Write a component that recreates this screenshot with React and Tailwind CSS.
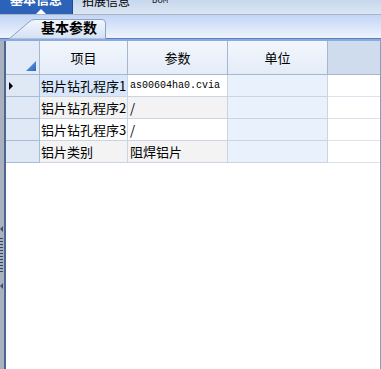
const cjk = { fontFamily: '"Noto Sans CJK SC", "Liberation Sans", sans-serif' };

const rows = [
  { name: '铝片钻孔程序1', value: 'as00604ha0.cvia', mono: true, current: true },
  { name: '铝片钻孔程序2', value: '/' },
  { name: '铝片钻孔程序3', value: '/' },
  { name: '铝片类别', value: '阻焊铝片' },
];

function TopTabs() {
  return (
    <div className="relative h-[15px] flex items-start border-b border-[#a9b5c6] bg-gradient-to-b from-[#c7d7ec] to-[#dbe6f3] overflow-hidden">
      <div className="relative w-[73px] h-[14px] bg-[#2c62b8] border-r border-[#1d4a93] overflow-hidden">
        <span className="absolute left-[10px] top-[-9px] text-[13px] font-bold text-white leading-[16px]" style={cjk}>基本信息</span>
        <span className="absolute left-[36px] bottom-0 w-0 h-0 border-l-[5px] border-r-[5px] border-b-[5px] border-l-transparent border-r-transparent border-b-white" />
      </div>
      <span className="ml-[9px] relative top-[-7px] text-[12px] text-black leading-[16px]" style={cjk}>拍展信息</span>
      <span className="ml-[22px] relative top-[-5px] text-[9px] text-[#222] leading-[12px]" style={{ fontFamily: '"Liberation Mono", monospace' }}>BOM</span>
    </div>
  );
}

function SubTabs() {
  return (
    <div className="relative h-[23px] bg-gradient-to-b from-[#c3d5f5] to-[#eef4fd]">
      <svg className="absolute left-[9px] top-[4px]" width="98" height="20" viewBox="0 0 98 20">
        <defs>
          <linearGradient id="tabg" x1="0" y1="0" x2="0" y2="1">
            <stop offset="0" stopColor="#f3f7fd" />
            <stop offset="1" stopColor="#d3e0f3" />
          </linearGradient>
        </defs>
        <path d="M0.5 19.5 L20 3 Q22 0.5 26 0.5 L93 0.5 Q96.5 0.5 96.5 4 L96.5 20 L0.5 20 Z" fill="url(#tabg)" stroke="#8aa2c6" />
      </svg>
      <span className="absolute left-[41px] top-[3px] text-[14px] font-bold text-black leading-[18px]" style={cjk}>基本参数</span>
    </div>
  );
}

function Splitter() {
  return (
    <div className="w-[6px] flex flex-col border-r-2 border-[#4f6690] bg-[#a9b1be]">
      <div className="h-[185px]" />
      <div className="w-0 h-0 border-t-[3px] border-b-[3px] border-r-[3px] border-t-transparent border-b-transparent border-r-[#3c4e6e]" />
      <div className="mt-[6px] flex flex-col gap-[2px]">
        {Array.from({ length: 12 }).map((_, i) => (
          <div key={i} className="w-[3px] h-[1px] bg-[#2f4468]" />
        ))}
      </div>
      <div className="mt-[11px] w-0 h-0 border-t-[3px] border-b-[3px] border-r-[3px] border-t-transparent border-b-transparent border-r-[#3c4e6e]" />
    </div>
  );
}

function Grid() {
  const head = 'h-[34px] border-r border-b border-[#a5b6ce] bg-gradient-to-b from-[#f3f7fc] to-[#e4ecf8] flex items-center justify-center text-[13px] text-black';
  return (
    <div className="flex-1 flex flex-col bg-white border-r border-[#8a9cbb]">
      <div className="grid grid-cols-[34px_88px_100px_100px_1fr]">
        <div className="relative h-[34px] border-r border-b border-[#a5b6ce] bg-[#e2ebf7]">
          <svg className="absolute right-[3px] bottom-[3px]" width="10" height="10" viewBox="0 0 10 10">
            <defs>
              <linearGradient id="cg" x1="0" y1="0" x2="1" y2="1">
                <stop offset="0" stopColor="#6ea1e4" />
                <stop offset="1" stopColor="#2f67c2" />
              </linearGradient>
            </defs>
            <path d="M10 0 L10 10 L0 10 Z" fill="url(#cg)" />
          </svg>
        </div>
        <div className={head} style={cjk}>项目</div>
        <div className={head} style={cjk}>参数</div>
        <div className={head} style={cjk}>单位</div>
        <div className="h-[34px] border-b border-[#a5b6ce] bg-[#cfdcee]" />
        {rows.map((r, i) => {
          const alt = i % 2 === 1;
          const nameBg = r.current ? 'bg-[#d8e7fb]' : alt ? 'bg-[#f3f3f3]' : 'bg-white';
          const valBg = alt ? 'bg-[#f3f3f3]' : 'bg-white';
          return [
            <div key={`h${i}`} className="h-[22px] border-r border-b border-[#a9bcd6] bg-[#dfe9f6] flex items-center pl-[3px]">
              {r.current && (
                <div className="w-0 h-0 border-t-[4px] border-b-[4px] border-l-[4px] border-t-transparent border-b-transparent border-l-black" />
              )}
            </div>,
            <div key={`n${i}`} className={`h-[22px] border-r border-b border-[#cbd4e1] ${nameBg} flex items-center pl-[1px] text-[13px] text-black whitespace-nowrap overflow-hidden`} style={cjk}>{r.name}</div>,
            <div
              key={`v${i}`}
              className={`h-[22px] border-r border-b border-[#cbd4e1] ${valBg} flex items-center pl-[2px] text-black whitespace-nowrap overflow-hidden ${r.mono ? 'text-[10px]' : 'text-[13px]'}`}
              style={r.mono ? { fontFamily: '"Liberation Mono", monospace' } : cjk}
            >
              {r.value}
            </div>,
            <div key={`u${i}`} className="h-[22px] border-r border-b border-[#cbd4e1] bg-[#e9f1fc]" />,
            <div key={`e${i}`} className="h-[22px] border-b border-[#dde3ec] bg-white" />,
          ];
        })}
      </div>
    </div>
  );
}

export default function App() {
  return (
    <div className="w-[381px] h-[369px] overflow-hidden flex flex-col bg-white">
      <TopTabs />
      <SubTabs />
      <div className="h-[1px] bg-[#5a80bf]" />
      <div className="h-[2px] bg-[#8aabe0]" />
      <div className="flex-1 flex">
        <Splitter />
        <Grid />
      </div>
    </div>
  );
}
